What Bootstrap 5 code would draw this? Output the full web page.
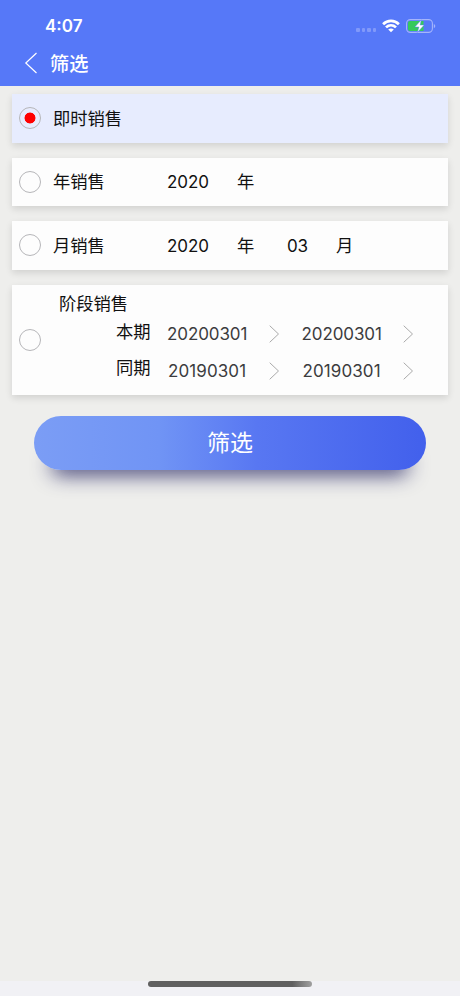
<!DOCTYPE html>
<html lang="zh-CN">
<head>
<meta charset="utf-8">
<meta name="viewport" content="width=device-width, initial-scale=1">
<title>筛选</title>
<link href="https://cdn.jsdelivr.net/npm/bootstrap@5.3.0/dist/css/bootstrap.min.css" rel="stylesheet">
<style>
body{font-family:Inter,"Noto Sans CJK SC",sans-serif;font-size:17.3px;line-height:24px;color:#111;background:#eeeeec}
.screen{height:996px}
.topbar{height:86px;background:#5678f8}
.status{height:50px;padding:1px 24px 0 45px}
.clock{font-size:17px;font-weight:600}
.heading{height:26px;padding-left:24px;font-size:19.2px;font-weight:500;gap:12px}
.heading span{padding-top:1px}
.signal{gap:2px;padding-top:9px;margin-right:6px}
.signal i{width:3.5px;height:4px;border-radius:1px;background:#8199fa}
.battery{margin-left:6px}
.options{padding:8px 12.5px 0 12px;gap:15px}
.option{border:0;border-radius:0;background:#fdfdfd;box-shadow:0 3px 7px rgba(0,0,0,.12)}
.option.chosen{background:#e7ecfe}
.single{height:48.6px;padding-left:7px;display:grid;grid-template-columns:34px 114px 70px 50px 49px 1fr;align-items:center}
.single span{padding-top:1px}
.single .value{font-size:17px;letter-spacing:-.1px}
.radio{appearance:none;width:22px;height:22px;margin:0;border:1.4px solid #b6b6b9;border-radius:50%;background:transparent}
.radio:checked{background:radial-gradient(circle,#f00 5.1px,transparent 5.8px)}
.stage{height:110px;padding-left:7px}
.stage-body{margin-left:18px;padding-top:7.5px}
.period{display:grid;grid-template-columns:51px 102px 32.5px 102px 12px;margin-left:57px;align-items:center}
.period+.period{margin-top:13px}
.date{color:#3c3c3e;font-size:17px;letter-spacing:-.1px;position:relative;top:2px}
.period.prior .date{letter-spacing:.1px;padding-left:1px}
.period.prior .term{position:relative;top:-1px}
.arrow{position:relative;top:2px;left:-.5px}
.submit{height:54px;margin:21px 34px 0;border:0;border-radius:27px;font-size:23px;line-height:55px;padding:0;color:#fff;background:linear-gradient(90deg,#7b9df5 0%,#7094f5 32%,#5877f2 57%,#4260ec 100%);box-shadow:0 22px 20px -17px rgba(25,25,90,.8)}
.submit:hover{color:#fff}
.home{height:15px;background:#f1f1f5}
.home span{width:164px;height:6px;border-radius:3px;background:linear-gradient(90deg,#606060 88%,#a0a0a0)}
svg{display:block;flex:none}
</style>
</head>
<body>
<div class="screen d-flex flex-column overflow-hidden">
  <header class="topbar text-white">
    <div class="status d-flex align-items-center">
      <span class="clock me-auto">4:07</span>
      <span class="signal d-flex"><i></i><i></i><i></i><i></i></span>
      <svg width="18" height="14" viewBox="0 0 18 14" fill="none" stroke="#fff" stroke-width="2.7"><path d="M1.1 5.2C5.6.7 12.4.7 16.9 5.2M4 8.4C6.9 5.6 11.1 5.6 14 8.4"/><path d="M9 13.3 6.2 10.6Q9 8.2 11.8 10.6Z" fill="#fff" stroke="none"/></svg>
      <svg class="battery" width="30" height="16" viewBox="0 0 30 16"><rect x=".6" y="1.6" width="25.8" height="12.8" rx="3.8" fill="none" stroke="#a5b5fb" stroke-width="1.1"/><path d="M4 3h13.5v10H4a2 2 0 0 1-2-2V5a2 2 0 0 1 2-2Z" fill="#35c95b"/><path d="M27.8 5.7q3 2.3 0 4.6z" fill="#a5b5fb"/><path d="M15.4 1.8 8.8 9h4.1l-1.6 5.5L18.2 7h-4.1z" fill="#fff" stroke="#5678f8" stroke-width=".5"/></svg>
    </div>
    <div class="heading d-flex align-items-center">
      <svg width="14" height="22" viewBox="0 0 14 22" fill="none" stroke="#fff" stroke-width="1.2"><path d="M12.5 1 1.8 11l10.7 10"/></svg>
      <span>筛选</span>
    </div>
  </header>

  <main class="flex-grow-1">
    <div class="options d-flex flex-column">
      <label class="option card single chosen"><input class="radio" type="radio" name="range" checked><span>即时销售</span></label>
      <label class="option card single"><input class="radio" type="radio" name="range"><span>年销售</span><span class="value">2020</span><span>年</span></label>
      <label class="option card single"><input class="radio" type="radio" name="range"><span>月销售</span><span class="value">2020</span><span>年</span><span class="value">03</span><span>月</span></label>
      <div class="option card stage flex-row">
        <input class="radio align-self-center flex-shrink-0" type="radio" name="range" aria-label="阶段销售">
        <div class="stage-body">
          <div>阶段销售</div>
          <div class="period mt-1">
            <span class="term">本期</span><span class="date">20200301</span>
            <svg class="arrow" width="12" height="18" viewBox="0 0 12 18" fill="none" stroke="#aaa" stroke-width="1"><path d="m.7.7 8.8 8.3-8.8 8.3"/></svg>
            <span class="date">20200301</span>
            <svg class="arrow" width="12" height="18" viewBox="0 0 12 18" fill="none" stroke="#aaa" stroke-width="1"><path d="m.7.7 8.8 8.3-8.8 8.3"/></svg>
          </div>
          <div class="period prior">
            <span class="term">同期</span><span class="date">20190301</span>
            <svg class="arrow" width="12" height="18" viewBox="0 0 12 18" fill="none" stroke="#aaa" stroke-width="1"><path d="m.7.7 8.8 8.3-8.8 8.3"/></svg>
            <span class="date">20190301</span>
            <svg class="arrow" width="12" height="18" viewBox="0 0 12 18" fill="none" stroke="#aaa" stroke-width="1"><path d="m.7.7 8.8 8.3-8.8 8.3"/></svg>
          </div>
        </div>
      </div>
    </div>
    <div class="d-grid"><button class="btn submit" type="button">筛选</button></div>
  </main>
  <footer class="home d-flex justify-content-center"><span></span></footer>
</div>
<script src="https://cdn.jsdelivr.net/npm/bootstrap@5.3.0/dist/js/bootstrap.bundle.min.js"></script>
</body>
</html>
